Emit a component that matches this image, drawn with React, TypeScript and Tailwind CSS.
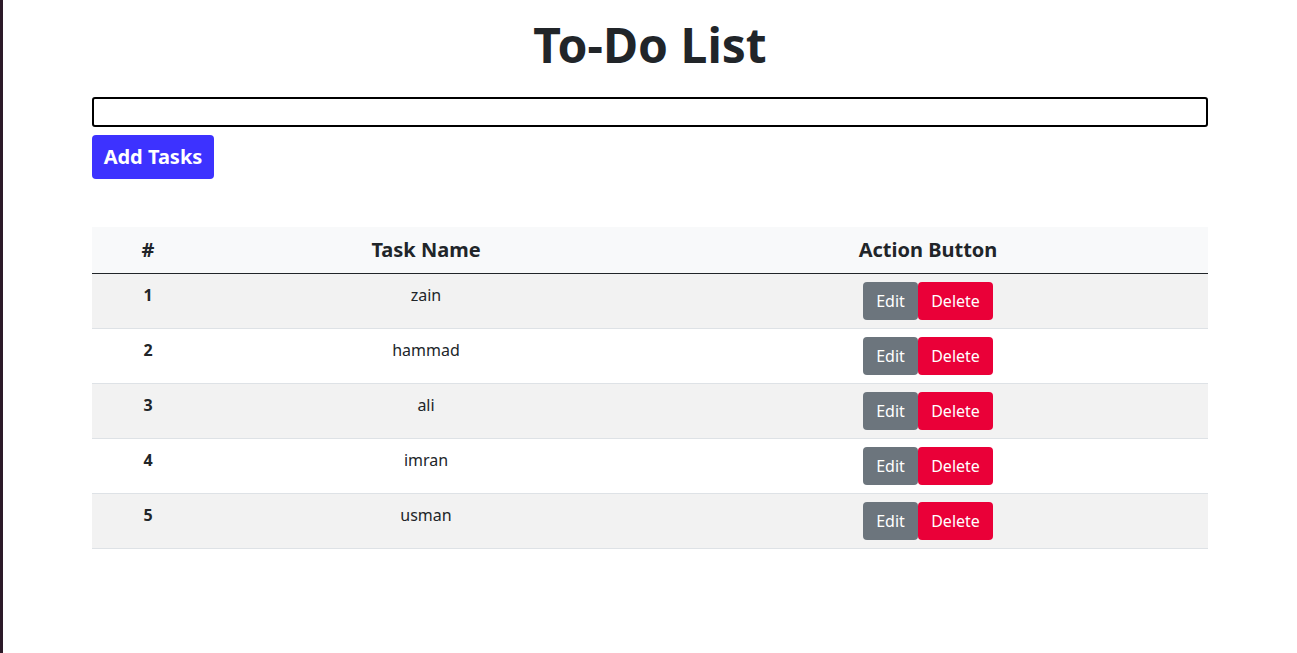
import React from "react";

type Task = { id: number; name: string };

const tasks: Task[] = [
  { id: 1, name: "zain" },
  { id: 2, name: "hammad" },
  { id: 3, name: "ali" },
  { id: 4, name: "imran" },
  { id: 5, name: "usman" },
];

export default function App() {
  return (
    <div
      className="flex min-h-[653px] w-full bg-white text-[#212529]"
      style={{ fontFamily: '"Noto Sans", "Open Sans", sans-serif' }}
    >
      {/* dark window edge on the left */}
      <div className="w-[3px] shrink-0 bg-[#2c1a29]" />

      <div className="flex-1">
        <div className="mx-auto w-full max-w-[1140px] px-3">
          <h1 className="mt-4 h-[58px] text-center text-[48px] font-bold leading-[58px]">
            To-Do List
          </h1>

          <input
            type="text"
            className="mt-[23px] block h-[30px] w-full rounded-[3px] border-2 border-black px-2 outline-none"
          />

          <button className="mt-2 h-[44px] w-[122px] rounded-[4px] bg-[#3d32ff] text-[20px] font-bold text-white">
            Add Tasks
          </button>

          <table className="mt-12 w-full border-collapse text-[16px]">
            <thead>
              <tr className="h-[46px] border-b border-[#212529] bg-[#f8f9fa]">
                <th className="w-[112px] text-center text-[20px] font-bold">#</th>
                <th className="w-[444px] text-center text-[20px] font-bold">Task Name</th>
                <th className="text-center text-[20px] font-bold">Action Button</th>
              </tr>
            </thead>
            <tbody>
              {tasks.map((t, i) => (
                <tr
                  key={t.id}
                  className={`border-b border-[#dee2e6] ${i % 2 === 0 ? "bg-[#f2f2f2]" : "bg-white"}`}
                >
                  <td className="h-[55px] pt-[9px] text-center align-top font-bold">{t.id}</td>
                  <td className="pt-[9px] text-center align-top">{t.name}</td>
                  <td className="pt-2 text-center align-top">
                    <div className="inline-flex">
                      <button className="h-[38px] w-[55px] rounded-[4px] bg-[#6c757d] text-white">
                        Edit
                      </button>
                      <button className="h-[38px] w-[75px] rounded-[4px] bg-[#ea0038] text-white">
                        Delete
                      </button>
                    </div>
                  </td>
                </tr>
              ))}
            </tbody>
          </table>
        </div>
      </div>
    </div>
  );
}
